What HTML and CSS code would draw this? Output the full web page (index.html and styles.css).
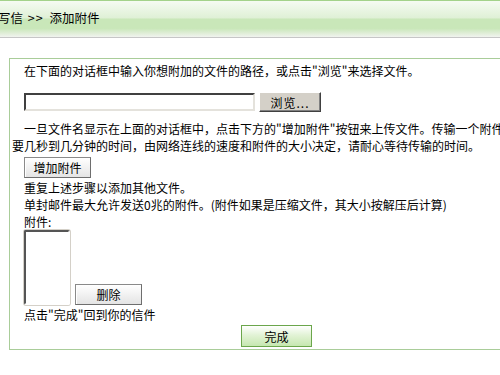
FILE: index.html
```html
<!DOCTYPE html>
<html lang="zh-CN">
<head>
  <meta charset="utf-8">
  <meta name="viewport" content="width=device-width, initial-scale=1">
  <title>添加附件</title>
  <link rel="stylesheet" href="styles.css">
</head>
<body>
  <div class="crumb">写信 <span class="sep">&gt;&gt;</span> 添加附件</div>

  <div class="panel">
    <p class="intro">在下面的对话框中输入你想附加的文件的路径，或点击"浏览"来选择文件。</p>

    <div class="file-row">
      <input type="text" class="path-input">
      <button class="btn-classic">浏览...</button>
    </div>

    <p class="note">一旦文件名显示在上面的对话框中，点击下方的"增加附件"按钮来上传文件。传输一个附件需<br>要几秒到几分钟的时间，由网络连线的速度和附件的大小决定，请耐心等待传输的时间。</p>

    <div class="indent">
      <button class="btn-gray btn-add">增加附件</button>
    </div>

    <div class="lines">
      <div>重复上述步骤以添加其他文件。</div>
      <div>单封邮件最大允许发送0兆的附件。(附件如果是压缩文件，其大小按解压后计算)</div>
      <div>附件:</div>
    </div>

    <div class="attach-row">
      <select class="attach-list" multiple size="4"></select>
      <button class="btn-gray btn-del">删除</button>
    </div>

    <div class="lines back">点击"完成"回到你的信件</div>

    <button class="btn-done">完成</button>
  </div>

  <script>
    // nothing to wire up yet, the buttons only post the form
  </script>
</body>
</html>
```

FILE: styles.css
```css
body {
  margin: 0;
  font-family: "Noto Sans CJK SC", "DejaVu Sans", sans-serif;
  font-size: 12px;
  color: #000;
  background: #fff;
  width: 600px;
}

.crumb {
  height: 36px;
  line-height: 34px;
  border-top: 1px solid #a3d28a;
  border-bottom: 1px solid #c6c6c6;
  background: linear-gradient(to bottom, #f5fbf2 0%, #dff0d6 47%, #c9e7b9 50%, #c9e7b9 76%, #f1f3ef 100%);
  text-indent: -2px;
  white-space: nowrap;
  font-size: 12.5px;
}

.crumb .sep {
  margin: 0 3px 0 2px;
  letter-spacing: 1px;
}

.panel {
  margin: 20px 0 0 9px;
  width: 560px;
  border: 1px solid #a9cd99;
  padding: 3px 2px 2px;
}

.panel p {
  margin: 0;
  line-height: 17px;
  text-indent: 12px;
  white-space: nowrap;
}

.file-row {
  display: flex;
  align-items: center;
  gap: 4px;
  margin-top: 13px;
  padding-left: 12px;
  height: 20px;
}

.path-input {
  box-sizing: border-box;
  width: 231px;
  height: 18px;
  margin: 0;
  padding: 0 2px;
  border: 2px solid;
  border-color: #404040 #e4e2dc #e4e2dc #404040;
  background: #fff;
  font: inherit;
}

.btn-classic {
  box-sizing: border-box;
  width: 62px;
  height: 20px;
  margin: 0;
  padding: 0;
  border: 1px solid;
  border-color: #fff #404040 #404040 #fff;
  box-shadow: inset -1px -1px #808080;
  background: #d4d0c8;
  font: inherit;
  letter-spacing: 1px;
  color: #000;
}

.note {
  margin-top: 8px !important;
}

.indent {
  padding-left: 12px;
  margin-top: 3px;
}

.btn-gray {
  box-sizing: border-box;
  width: 67px;
  height: 21px;
  margin: 0;
  padding: 0;
  border: 1px solid;
  border-color: #8a8a8a #6e6e6e #6e6e6e #8a8a8a;
  box-shadow: inset 1px 1px #fff;
  background: linear-gradient(to bottom, #ffffff, #e4e4e4);
  font: inherit;
  color: #000;
  display: block;
}

.lines {
  line-height: 17px;
  padding-left: 12px;
  margin-top: 1px;
  white-space: nowrap;
}

.attach-row {
  display: flex;
  align-items: flex-end;
  gap: 5px;
  padding-left: 12px;
}

.attach-list {
  box-sizing: border-box;
  width: 46px;
  height: 75px;
  margin: 0;
  padding: 0;
  border: 2px solid;
  border-color: #555 #fff #fff #555;
  box-shadow: 0 0 0 1px #d4d0c8;
  background: #fff;
  overflow: hidden;
}

.btn-del {
  width: 67px;
}

.back {
  margin-top: 1px;
}

.btn-done {
  display: block;
  box-sizing: border-box;
  width: 71px;
  height: 22px;
  margin: 2px 0 0 229px;
  padding: 0;
  border: 1px solid #6ba64b;
  background: linear-gradient(to bottom, #ffffff 0%, #e2f3d6 45%, #c6e7b0 100%);
  font: inherit;
  color: #000;
}
```
